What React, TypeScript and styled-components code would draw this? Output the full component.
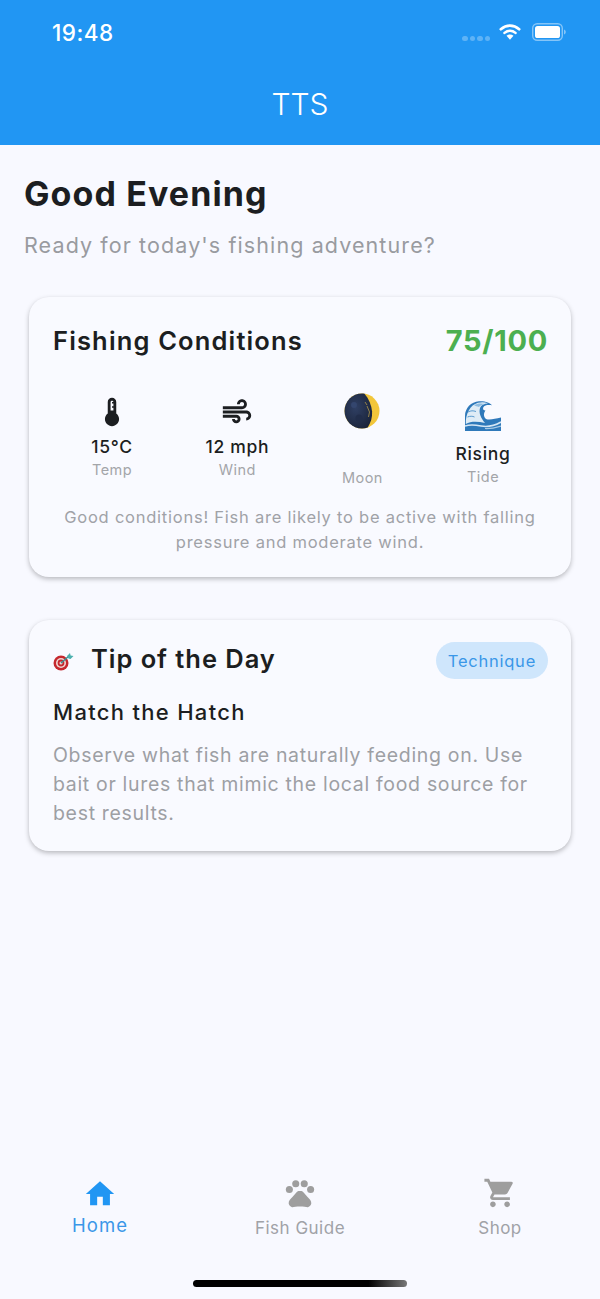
import React from "react";
import styled, { createGlobalStyle } from "styled-components";
import { MdDeviceThermostat, MdAir, MdHome, MdPets, MdShoppingCart } from "react-icons/md";

const Global = createGlobalStyle`
  html, body { margin: 0; padding: 0; background: #f8f9ff; }
  * { box-sizing: border-box; }
`;

const Screen = styled.div`
  width: 600px;
  height: 1299px;
  display: flex;
  flex-direction: column;
  overflow: hidden;
  background: #f8f9ff;
  font-family: Inter, "Liberation Sans", sans-serif;
  color: #1c1e21;
`;

const Top = styled.header`
  height: 145px;
  flex: none;
  background: #2196f3;
  color: #fff;
  display: flex;
  flex-direction: column;
`;

const StatusBar = styled.div`
  height: 66px;
  padding: 0 34px 2px 52px;
  display: flex;
  align-items: center;
  justify-content: space-between;
`;

const Clock = styled.span`
  font-size: 22.5px;
  font-weight: 500;
  letter-spacing: 0.45px;
`;

const StatusIcons = styled.div`
  display: flex;
  align-items: center;
  gap: 11px;
`;

const Dots = styled.div`
  display: flex;
  gap: 2px;
  margin: 13px -2px 0 0;
`;

const Dot = styled.span`
  width: 5.5px;
  height: 5.5px;
  border-radius: 50%;
  background: rgba(255, 255, 255, 0.28);
`;

const StatusSvg = styled.svg<{ $lift: number }>`
  margin-top: ${(p) => p.$lift}px;
`;

const TargetSvg = styled.svg`
  margin-top: 6px;
`;

const Title = styled.div`
  text-align: center;
  font-size: 30px;
  font-weight: 300;
  line-height: 76px;
`;

const Main = styled.main`
  flex: 1;
  padding: 28px 24px 0;
  display: flex;
  flex-direction: column;
`;

const Greeting = styled.h1`
  margin: 0;
  font-size: 34px;
  line-height: 42px;
  font-weight: 700;
  letter-spacing: 1.1px;
  color: #1c1e21;
`;

const Subtitle = styled.p`
  margin: 15px 0 0;
  font-size: 21.5px;
  line-height: 30px;
  font-weight: 400;
  letter-spacing: 1.1px;
  color: #999ba0;
`;

const Card = styled.section<{ $top: number; $height: number; $padTop: number }>`
  margin: ${(p) => p.$top}px 5px 0;
  height: ${(p) => p.$height}px;
  padding: ${(p) => p.$padTop}px 24px 24px;
  flex: none;
  background: #f9faff;
  border-radius: 20px;
  box-shadow: 0 2px 5px rgba(0, 0, 0, 0.26), 0 0 2px rgba(0, 0, 0, 0.02);
`;

const CardHead = styled.div`
  display: flex;
  align-items: flex-start;
  justify-content: space-between;
`;

const CardTitle = styled.h2<{ $spacing: number }>`
  margin: 0;
  font-size: 25.5px;
  line-height: 38px;
  font-weight: 600;
  letter-spacing: ${(p) => p.$spacing}px;
  color: #1c1e21;
`;

const Score = styled.span`
  font-size: 29px;
  line-height: 38px;
  font-weight: 700;
  letter-spacing: 0.7px;
  margin-right: -1px;
  color: #4caf50;
`;

const Stats = styled.div`
  display: flex;
  justify-content: space-around;
  align-items: flex-start;
  margin-top: 33px;
  padding-left: 2px;
`;

const Stat = styled.div`
  display: flex;
  flex-direction: column;
  align-items: center;
`;

const Glyph = styled.div<{ $height: number }>`
  height: ${(p) => p.$height}px;
  display: flex;
  align-items: flex-end;
  justify-content: center;
  color: #1c1e21;
`;

const StatValue = styled.div<{ $height: number; $gap: number }>`
  height: ${(p) => p.$height}px;
  min-width: 40px;
  margin-top: ${(p) => p.$gap}px;
  font-size: 17.5px;
  line-height: 24px;
  font-weight: 500;
  letter-spacing: 0.7px;
  text-align: center;
  white-space: nowrap;
`;

const StatLabel = styled.div`
  font-size: 14.5px;
  line-height: 22px;
  letter-spacing: 0.45px;
  color: #a3a5a9;
`;

const Advice = styled.p`
  margin: 16px -4px 0;
  text-align: center;
  font-size: 16.5px;
  line-height: 25px;
  letter-spacing: 0.76px;
  color: #a0a2a7;
`;

const TipTitleRow = styled.div`
  display: flex;
  align-items: center;
  gap: 17px;
`;

const Chip = styled.span`
  height: 37px;
  padding: 0 12px;
  display: flex;
  align-items: center;
  border-radius: 19px;
  background: #cfe6fc;
  color: #3a97e8;
  font-size: 16.5px;
  letter-spacing: 0.75px;
  margin: 2px -1px 0 0;
`;

const TipName = styled.h3`
  margin: 18px 0 0;
  font-size: 22px;
  line-height: 30px;
  font-weight: 500;
  letter-spacing: 1.3px;
  color: #1c1e21;
`;

const TipBody = styled.p`
  margin: 14px 0 0;
  font-size: 19.5px;
  line-height: 29px;
  letter-spacing: 0.68px;
  color: #9d9fa4;
`;

const Tabs = styled.nav`
  height: 116px;
  flex: none;
  display: grid;
  grid-template-columns: repeat(3, 1fr);
`;

const Tab = styled.div<{ $active?: boolean }>`
  display: flex;
  flex-direction: column;
  align-items: center;
  padding-top: ${(p) => (p.$active ? 17 : 16)}px;
  color: ${(p) => (p.$active ? "#2196f3" : "#9e9e9e")};
`;

const TabLabel = styled.span<{ $active?: boolean }>`
  font-size: ${(p) => (p.$active ? 18.5 : 17)}px;
  line-height: 24px;
  letter-spacing: ${(p) => (p.$active ? 1 : 0.5)}px;
  margin-top: ${(p) => (p.$active ? 2 : 6)}px;
  color: ${(p) => (p.$active ? "#3a97e8" : "#a0a2a7")};
`;

const HomeZone = styled.div`
  height: 23px;
  flex: none;
  display: flex;
  justify-content: center;
  padding-top: 4px;
`;

const HomeBar = styled.div`
  width: 214px;
  height: 7px;
  border-radius: 4px;
  background: linear-gradient(90deg, #000 0, #000 82%, #777 100%);
`;

const Wifi = () => (
  <StatusSvg $lift={-1} width="22" height="17" viewBox="0 0 24 18" fill="none">
    <path d="M2 6.500C8 1.200 16 1.200 22 6.500" stroke="#fff" strokeWidth="3" strokeLinecap="round" />
    <path d="M6 10.500c3.600-3 8.400-3 12 0" stroke="#fff" strokeWidth="2.800" strokeLinecap="round" />
    <path d="M12 18l-3.800-4.400c2.200-1.600 5.400-1.600 7.600 0z" fill="#fff" />
  </StatusSvg>
);

const Battery = () => (
  <StatusSvg $lift={0} width="34" height="18" viewBox="0 0 34 18" fill="none">
    <rect x="0.700" y="0.700" width="29.600" height="16.600" rx="4.500" stroke="#fff" strokeOpacity="0.45" strokeWidth="1.400" />
    <rect x="3" y="3" width="25" height="12" rx="2.600" fill="#fff" />
    <path d="M32 6.500c1.200.4 1.800 1.400 1.800 2.500s-.6 2.100-1.800 2.500z" fill="#fff" fillOpacity="0.45" />
  </StatusSvg>
);

const Moon = () => (
  <svg width="36" height="36" viewBox="0 0 36 36">
    <defs>
      <radialGradient id="moonDark" cx="0.4" cy="0.4" r="0.7">
        <stop offset="0" stopColor="#2f3f63" />
        <stop offset="1" stopColor="#1a2339" />
      </radialGradient>
    </defs>
    <circle cx="18" cy="18" r="17.500" fill="#f2c63a" />
    <path d="M18 .5C8.300.5.500 8.300.5 18s7.800 17.500 17.500 17.500c2 0 3.900-.3 5.700-.9 3-4.800 4.800-10.400 4.400-16.100C27.400 12 25 6 20.500.7 19.700.6 18.800.5 18 .5z" fill="url(#moonDark)" />
    <circle cx="10" cy="12" r="3" fill="#34466e" />
    <circle cx="15" cy="25" r="3.500" fill="#212d4a" />
    <path d="M23 13l2.500 6-1 5M21 9l2 3" stroke="#a08c48" strokeWidth="0.900" fill="none" />
  </svg>
);

const Wave = () => (
  <svg width="36" height="30" viewBox="0 0 36 30">
    <path d="M0 30V15C0 7 6 1 14 .3c6-.5 11 1.700 13 4-3-.7-7-.7-8.500 1.700-1.300 2.200.5 3.800 2 3.400-1.800 2.500-2.500 6 .5 8.600 4 1.500 9-.5 15-1.500V30z" fill="#2f79ba" />
    <path d="M.8 23C.5 13 5 4 13 1.800c4-1 7-.7 10 .7-4 .2-7 1.500-8 4.500-1.500 5 1 10 5 15-7-1.500-14-2-19.200 1z" fill="#dfecf6" />
    <path d="M3 11c3-1.500 5-1.500 8-.5M2.500 16c2.500-1 5-1 7 0" stroke="#5a9bd0" strokeWidth="1" fill="none" />
    <path d="M9 4c3-1.500 7-2 11-1-3 .5-5 1.500-6 3-2-.5-3.500-1-5-2z" fill="#8fbce0" />
    <path d="M0 25c6-2 11-1 16 0s13 0 20-4" stroke="#d5e6f4" strokeWidth="1.600" fill="none" />
    <path d="M20 27.500c6 .3 11-1 16-2.500" stroke="#a9cbe7" strokeWidth="1.200" fill="none" />
  </svg>
);

const Target = () => (
  <TargetSvg width="21" height="18" viewBox="0 0 21 18">
    <circle cx="8" cy="10" r="7.500" fill="#c5282e" />
    <circle cx="8" cy="10" r="5" fill="#f0d9d5" />
    <circle cx="8" cy="10" r="3.400" fill="#c5282e" />
    <circle cx="8" cy="10" r="1.500" fill="#f0d9d5" />
    <path d="M8 10L16 3" stroke="#3d8f92" strokeWidth="1.500" />
    <path d="M14 3l3-3 .6 2.400L20.500 3l-3 3-2-.6z" fill="#4bb0ae" />
  </TargetSvg>
);

export default function App() {
  return (
    <Screen>
      <Global />
      <Top>
        <StatusBar>
          <Clock>19:48</Clock>
          <StatusIcons>
            <Dots>
              <Dot />
              <Dot />
              <Dot />
              <Dot />
            </Dots>
            <Wifi />
            <Battery />
          </StatusIcons>
        </StatusBar>
        <Title>TTS</Title>
      </Top>
      <Main>
        <Greeting>Good Evening</Greeting>
        <Subtitle>Ready for today's fishing adventure?</Subtitle>
        <Card $top={37} $height={280} $padTop={25}>
          <CardHead>
            <CardTitle $spacing={1.15}>Fishing Conditions</CardTitle>
            <Score>75/100</Score>
          </CardHead>
          <Stats>
            <Stat>
              <Glyph $height={36}>
                <MdDeviceThermostat size={34} />
              </Glyph>
              <StatValue $height={24} $gap={6}>15°C</StatValue>
              <StatLabel>Temp</StatLabel>
            </Stat>
            <Stat>
              <Glyph $height={36}>
                <MdAir size={34} />
              </Glyph>
              <StatValue $height={24} $gap={6}>12 mph</StatValue>
              <StatLabel>Wind</StatLabel>
            </Stat>
            <Stat>
              <Glyph $height={36}>
                <Moon />
              </Glyph>
              <StatValue $height={32} $gap={6} />
              <StatLabel>Moon</StatLabel>
            </Stat>
            <Stat>
              <Glyph $height={38}>
                <Wave />
              </Glyph>
              <StatValue $height={24} $gap={11}>Rising</StatValue>
              <StatLabel>Tide</StatLabel>
            </Stat>
          </Stats>
          <Advice>
            Good conditions! Fish are likely to be active with falling pressure and moderate wind.
          </Advice>
        </Card>
        <Card $top={43} $height={231} $padTop={20}>
          <CardHead>
            <TipTitleRow>
              <Target />
              <CardTitle $spacing={0.95}>Tip of the Day</CardTitle>
            </TipTitleRow>
            <Chip>Technique</Chip>
          </CardHead>
          <TipName>Match the Hatch</TipName>
          <TipBody>
            Observe what fish are naturally feeding on. Use bait or lures that mimic the local food source for best results.
          </TipBody>
        </Card>
      </Main>
      <Tabs>
        <Tab $active>
          <MdHome size={34} />
          <TabLabel $active>Home</TabLabel>
        </Tab>
        <Tab>
          <MdPets size={34} />
          <TabLabel>Fish Guide</TabLabel>
        </Tab>
        <Tab>
          <MdShoppingCart size={34} />
          <TabLabel>Shop</TabLabel>
        </Tab>
      </Tabs>
      <HomeZone>
        <HomeBar />
      </HomeZone>
    </Screen>
  );
}
